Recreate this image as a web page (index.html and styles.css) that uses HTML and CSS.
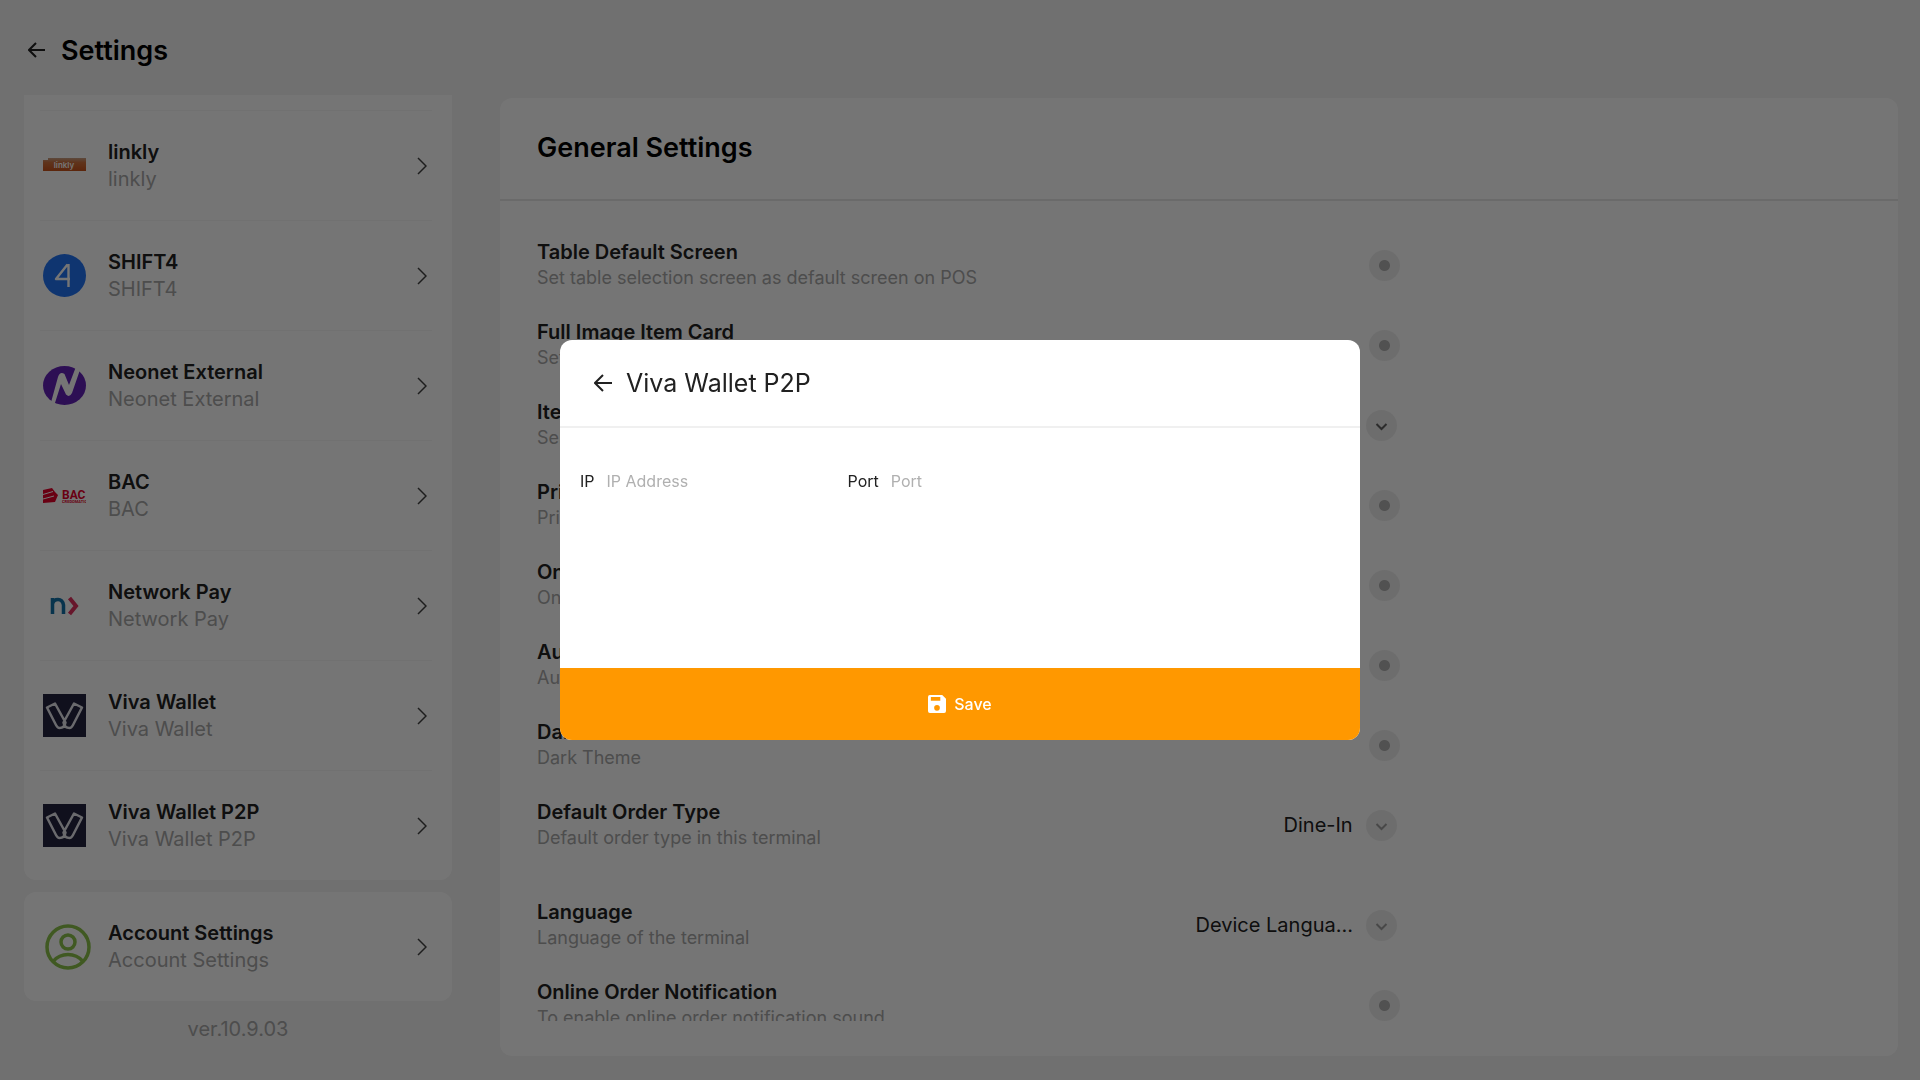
FILE: index.html
```html
<!DOCTYPE html>
<html lang="en">

<head>
    <meta charset="UTF-8">
    <title>Settings</title>
    <link rel="stylesheet" href="styles.css">
</head>

<body>
    <div class="page">
        <header class="topbar">
            <button type="button" class="back" aria-label="Back">
                <svg width="18" height="16" viewBox="0 0 18 16"><path d="M17 8H1M8 1L1 8l7 7" /></svg>
            </button>
            <h1>Settings</h1>
        </header>

        <div class="content">
            <aside class="sidebar">
                <nav class="menu">
                    <a href="#" class="menu-item">
                        <svg class="logo" width="43" height="43" viewBox="0 0 43 43">
                            <defs>
                                <linearGradient id="lk" x1="0" y1="0" x2="0" y2="1">
                                    <stop offset="0" stop-color="#c9a084" />
                                    <stop offset="0.35" stop-color="#d0703c" />
                                    <stop offset="1" stop-color="#c8531c" />
                                </linearGradient>
                            </defs>
                            <path d="M0 16h5v-2h38v13H0z" fill="url(#lk)" />
                            <text x="21" y="24" class="logo-linkly">linkly</text>
                        </svg>
                        <span class="text"><b>linkly</b><small>linkly</small></span>
                        <svg class="chevron" width="10" height="18" viewBox="0 0 10 18"><path d="M1 1l8 8-8 8" /></svg>
                    </a>
                    <a href="#" class="menu-item">
                        <svg class="logo" width="43" height="43" viewBox="0 0 43 43">
                            <circle cx="21.5" cy="21.5" r="21.5" fill="#2173f5" />
                            <path d="M24.500 10.500L13 25h14M25.500 10v23" fill="none" stroke="#fff" stroke-width="2.400" stroke-linejoin="round" />
                        </svg>
                        <span class="text"><b>SHIFT4</b><small>SHIFT4</small></span>
                        <svg class="chevron" width="10" height="18" viewBox="0 0 10 18"><path d="M1 1l8 8-8 8" /></svg>
                    </a>
                    <a href="#" class="menu-item">
                        <svg class="logo" width="43" height="43" viewBox="0 0 43 43">
                            <ellipse cx="21.500" cy="21.500" rx="21.500" ry="19.500" fill="#6322b8" />
                            <path d="M7 42L15 13Q17 7 21.500 10L26 21L34 0L38 3L29 29Q26.500 34 23 30.500L18 20L11 42z" fill="#fff" />
                        </svg>
                        <span class="text"><b>Neonet External</b><small>Neonet External</small></span>
                        <svg class="chevron" width="10" height="18" viewBox="0 0 10 18"><path d="M1 1l8 8-8 8" /></svg>
                    </a>
                    <a href="#" class="menu-item">
                        <svg class="logo" width="43" height="43" viewBox="0 0 43 43">
                            <path d="M0 16l9-2 3 4 3 3-3 7-12 1z" fill="#e4002b" />
                            <path d="M0 20.500l10-3M0 25l11-3" stroke="#fff" />
                            <text x="19" y="25" class="logo-bac">BAC</text>
                            <text x="19" y="29" class="logo-bac-sub">CREDOMATIC</text>
                        </svg>
                        <span class="text"><b>BAC</b><small>BAC</small></span>
                        <svg class="chevron" width="10" height="18" viewBox="0 0 10 18"><path d="M1 1l8 8-8 8" /></svg>
                    </a>
                    <a href="#" class="menu-item">
                        <svg class="logo" width="43" height="43" viewBox="0 0 43 43">
                            <path d="M9.500 30V14M9.500 20q1-4.500 5.500-4.500t5.500 5.500v9" fill="none" stroke="#1272a8" stroke-width="3.500" />
                            <path d="M26.500 14l6.500 8-6.500 8" fill="none" stroke="#e0305f" stroke-width="4" />
                        </svg>
                        <span class="text"><b>Network Pay</b><small>Network Pay</small></span>
                        <svg class="chevron" width="10" height="18" viewBox="0 0 10 18"><path d="M1 1l8 8-8 8" /></svg>
                    </a>
                    <a href="#" class="menu-item">
                        <svg class="logo" width="43" height="43" viewBox="0 0 43 43">
                            <path d="M0 0h43v43H0z" fill="#23243f" />
                            <path d="M4 13.500l8-4 10.500 19q-1 5.500-6 5.500-2 0-3.500-3zM39 13.500l-8-4-10.500 19q1 5.500 6 5.500 2 0 3.500-3z" fill="none" stroke="#e6e6ee" stroke-width="2.500" stroke-linejoin="round" />
                        </svg>
                        <span class="text"><b>Viva Wallet</b><small>Viva Wallet</small></span>
                        <svg class="chevron" width="10" height="18" viewBox="0 0 10 18"><path d="M1 1l8 8-8 8" /></svg>
                    </a>
                    <a href="#" class="menu-item">
                        <svg class="logo" width="43" height="43" viewBox="0 0 43 43">
                            <path d="M0 0h43v43H0z" fill="#23243f" />
                            <path d="M4 13.500l8-4 10.500 19q-1 5.500-6 5.500-2 0-3.500-3zM39 13.500l-8-4-10.500 19q1 5.500 6 5.500 2 0 3.500-3z" fill="none" stroke="#e6e6ee" stroke-width="2.500" stroke-linejoin="round" />
                        </svg>
                        <span class="text"><b>Viva Wallet P2P</b><small>Viva Wallet P2P</small></span>
                        <svg class="chevron" width="10" height="18" viewBox="0 0 10 18"><path d="M1 1l8 8-8 8" /></svg>
                    </a>
                </nav>
                <a href="#" class="menu-item account">
                    <svg class="logo" width="48" height="48" viewBox="0 0 48 48">
                        <g fill="none" stroke="#8bc34a" stroke-width="3.500">
                            <circle cx="24" cy="24" r="21" />
                            <circle cx="24" cy="19" r="7" />
                            <path d="M9 38.500q6-7 15-7t15 7" />
                        </g>
                    </svg>
                    <span class="text"><b>Account Settings</b><small>Account Settings</small></span>
                    <svg class="chevron" width="10" height="18" viewBox="0 0 10 18"><path d="M1 1l8 8-8 8" /></svg>
                </a>
                <p class="version">ver.10.9.03</p>
            </aside>

            <main class="panel">
                <h2>General Settings</h2>
                <div class="options">
                    <div class="option">
                        <label class="text" for="table-screen"><b>Table Default Screen</b><small>Set table selection screen as default screen on POS</small></label>
                        <input type="checkbox" class="toggle" id="table-screen">
                    </div>
                    <div class="option">
                        <label class="text" for="full-image"><b>Full Image Item Card</b><small>Set full image item card</small></label>
                        <input type="checkbox" class="toggle" id="full-image">
                    </div>
                    <div class="option">
                        <label class="text" for="item-size"><b>Item Size</b><small>Select item size</small></label>
                        <span class="picker dark">
                            <select id="item-size"><option>Small</option></select>
                            <svg width="31" height="31" viewBox="0 0 31 31"><circle cx="15.500" cy="15.500" r="15.500" /><path d="M10.500 14l5 5 5-5" /></svg>
                        </span>
                    </div>
                    <div class="option">
                        <label class="text" for="print"><b>Print</b><small>Print</small></label>
                        <input type="checkbox" class="toggle" id="print">
                    </div>
                    <div class="option">
                        <label class="text" for="online"><b>Online</b><small>Online</small></label>
                        <input type="checkbox" class="toggle" id="online">
                    </div>
                    <div class="option">
                        <label class="text" for="auto"><b>Auto</b><small>Auto</small></label>
                        <input type="checkbox" class="toggle" id="auto">
                    </div>
                    <div class="option">
                        <label class="text" for="dark"><b>Dark Theme</b><small>Dark Theme</small></label>
                        <input type="checkbox" class="toggle" id="dark">
                    </div>
                    <div class="option spaced">
                        <label class="text" for="order-type"><b>Default Order Type</b><small>Default order type in this terminal</small></label>
                        <span class="picker">
                            <select id="order-type"><option>Dine-In</option></select>
                            <svg width="31" height="31" viewBox="0 0 31 31"><circle cx="15.500" cy="15.500" r="15.500" /><path d="M10.500 14l5 5 5-5" /></svg>
                        </span>
                    </div>
                    <div class="option">
                        <label class="text" for="language"><b>Language</b><small>Language of the terminal</small></label>
                        <span class="picker">
                            <select id="language"><option>Device Langua...</option></select>
                            <svg width="31" height="31" viewBox="0 0 31 31"><circle cx="15.500" cy="15.500" r="15.500" /><path d="M10.500 14l5 5 5-5" /></svg>
                        </span>
                    </div>
                    <div class="option">
                        <label class="text" for="notification"><b>Online Order Notification</b><small>To enable online order notification sound</small></label>
                        <input type="checkbox" class="toggle" id="notification">
                    </div>
                </div>
            </main>
        </div>
    </div>

    <div class="overlay">
        <form class="dialog" role="dialog" aria-labelledby="dialog-title">
            <div class="dialog-header">
                <button type="button" class="back" aria-label="Back">
                    <svg width="18" height="18" viewBox="0 0 18 18"><path d="M18 9H1M9 1L1 9l8 8" /></svg>
                </button>
                <h2 id="dialog-title">Viva Wallet P2P</h2>
            </div>
            <div class="dialog-body">
                <div class="field">
                    <label for="ip">IP</label>
                    <input type="text" id="ip" placeholder="IP Address">
                </div>
                <div class="field">
                    <label for="port">Port</label>
                    <input type="text" id="port" placeholder="Port">
                </div>
            </div>
            <button type="submit" class="save">
                <svg width="18" height="18" viewBox="0 0 19 19"><path fill-rule="evenodd" d="M2 0h13l4 4v13a2 2 0 0 1-2 2H2a2 2 0 0 1-2-2V2a2 2 0 0 1 2-2zM3 2v4h10V2zM9.500 10.500a3 3 0 1 0 0 6 3 3 0 0 0 0-6z" /></svg>
                Save
            </button>
        </form>
    </div>
</body>

</html>
```
FILE: styles.css
```css
* {
    box-sizing: border-box;
}

body {
    margin: 0;
    font-family: Inter, "Liberation Sans", sans-serif;
    font-size: 20px;
    color: #212121;
    background-color: #f4f4f4;
}

h1,
h2,
p {
    margin: 0;
}

button,
input,
select {
    font-family: inherit;
    color: inherit;
}

.page {
    height: 100vh;
    display: flex;
    flex-direction: column;
    overflow: hidden;
}

.topbar {
    height: 95px;
    padding: 6px 28px 0;
    display: flex;
    flex: none;
    align-items: flex-start;
    gap: 15px;
}

.topbar h1 {
    font-size: 27px;
    font-weight: 600;
    line-height: 90px;
    color: #000;
}

.back {
    height: 88px;
    padding: 0;
    display: flex;
    align-items: center;
    border: none;
    background: none;
    cursor: pointer;
}

.back svg {
    fill: none;
    stroke: #212121;
    stroke-width: 2;
}

.content {
    flex: 1;
    min-height: 0;
    display: flex;
    gap: 48px;
    padding: 0 22px 24px 24px;
}

.sidebar {
    width: 428px;
    flex: none;
    display: flex;
    flex-direction: column;
}

.menu {
    flex: 1;
    min-height: 0;
    padding-top: 15px;
    display: flex;
    flex-direction: column;
    background-color: #fff;
    border-radius: 0 0 12px 12px;
}

.menu-item {
    flex: 1;
    margin: 0 20px 0 16px;
    padding: 0 5px 0 3px;
    display: flex;
    align-items: center;
    border-top: 1px solid #f6f6f6;
    color: inherit;
    text-decoration: none;
}

.logo {
    flex: none;
    margin-right: 22px;
}

.logo-linkly {
    font-size: 8px;
    font-weight: 600;
    fill: #fff;
    text-anchor: middle;
}

.logo-bac {
    font-family: Roboto, sans-serif;
    font-size: 12px;
    font-weight: 700;
    fill: #e4002b;
}

.logo-bac-sub {
    font-family: Roboto, sans-serif;
    font-size: 4px;
    font-weight: 700;
    fill: #e4002b;
}

.text {
    flex: 1;
    display: flex;
    flex-direction: column;
    line-height: 27px;
}

.text b {
    font-weight: 600;
}

.text small {
    font-size: 20px;
    color: #a8a8a8;
}

.chevron {
    fill: none;
    stroke: #424242;
    stroke-width: 1.5;
}

.account {
    flex: none;
    height: 109px;
    margin: 12px 0 0;
    padding: 0 25px 0 20px;
    border: none;
    border-radius: 12px;
    background-color: #fff;
}

.account .logo {
    margin-right: 16px;
}

.version {
    padding-top: 1px;
    line-height: 54px;
    text-align: center;
    color: #a8a8a8;
}

.panel {
    flex: 1;
    margin-top: 3px;
    display: flex;
    flex-direction: column;
    background-color: #fff;
    border-radius: 12px;
}

.panel h2 {
    padding: 0 37px 1px;
    font-size: 27px;
    font-weight: 600;
    line-height: 100px;
    color: #000;
    border-bottom: 2px solid #e8e8e8;
}

.options {
    flex: 1;
    min-height: 0;
    margin-bottom: 35px;
    padding: 24px 34px 0 37px;
    overflow: hidden;
}

.option {
    width: 65%;
    height: 80px;
    display: flex;
    align-items: center;
}

.option .text {
    line-height: 26px;
}

.option .text small {
    font-size: 18px;
}

.spaced {
    margin-bottom: 20px;
}

.toggle {
    width: 31px;
    height: 31px;
    margin: 0;
    appearance: none;
    border-radius: 50%;
    background: radial-gradient(circle, #b0b0b0 5px, #eee 6px);
}

.picker {
    display: flex;
    align-items: center;
    gap: 12px;
    margin-right: 3px;
}

.picker select {
    padding: 0;
    appearance: none;
    border: none;
    background: none;
    font-size: 20px;
}

.picker svg {
    fill: #eee;
    stroke: none;
}

.picker path {
    fill: none;
    stroke: #9e9e9e;
    stroke-width: 2;
}

.picker.dark path {
    stroke: #616161;
}

.overlay {
    position: fixed;
    inset: 0;
    display: flex;
    align-items: center;
    justify-content: center;
    background-color: rgba(0, 0, 0, 0.54);
}

.dialog {
    width: 800px;
    min-height: 400px;
    display: flex;
    flex-direction: column;
    overflow: hidden;
    border-radius: 12px;
    background-color: #fff;
}

.dialog-header {
    padding: 0 34px;
    display: flex;
    align-items: center;
    gap: 14px;
    border-bottom: 2px solid #f0f0f0;
}

.dialog-header .back {
    height: 86px;
}

.dialog-header h2 {
    font-size: 25px;
    font-weight: 400;
}

.dialog-body {
    flex: 1;
    padding: 40px 20px;
    display: flex;
    align-items: flex-start;
    gap: 21px;
    font-size: 16px;
}

.field {
    display: flex;
    align-items: center;
    gap: 12px;
}

.field input {
    width: 220px;
    height: 26px;
    padding: 0;
    border: none;
    outline: none;
    font-size: 16px;
}

.field input::placeholder {
    color: #b0b0b0;
}

.save {
    height: 72px;
    display: flex;
    align-items: center;
    justify-content: center;
    gap: 8px;
    border: none;
    background-color: #ff9800;
    color: #fff;
    font-size: 16px;
    font-weight: 500;
    cursor: pointer;
}

.save svg {
    fill: #fff;
}
```
